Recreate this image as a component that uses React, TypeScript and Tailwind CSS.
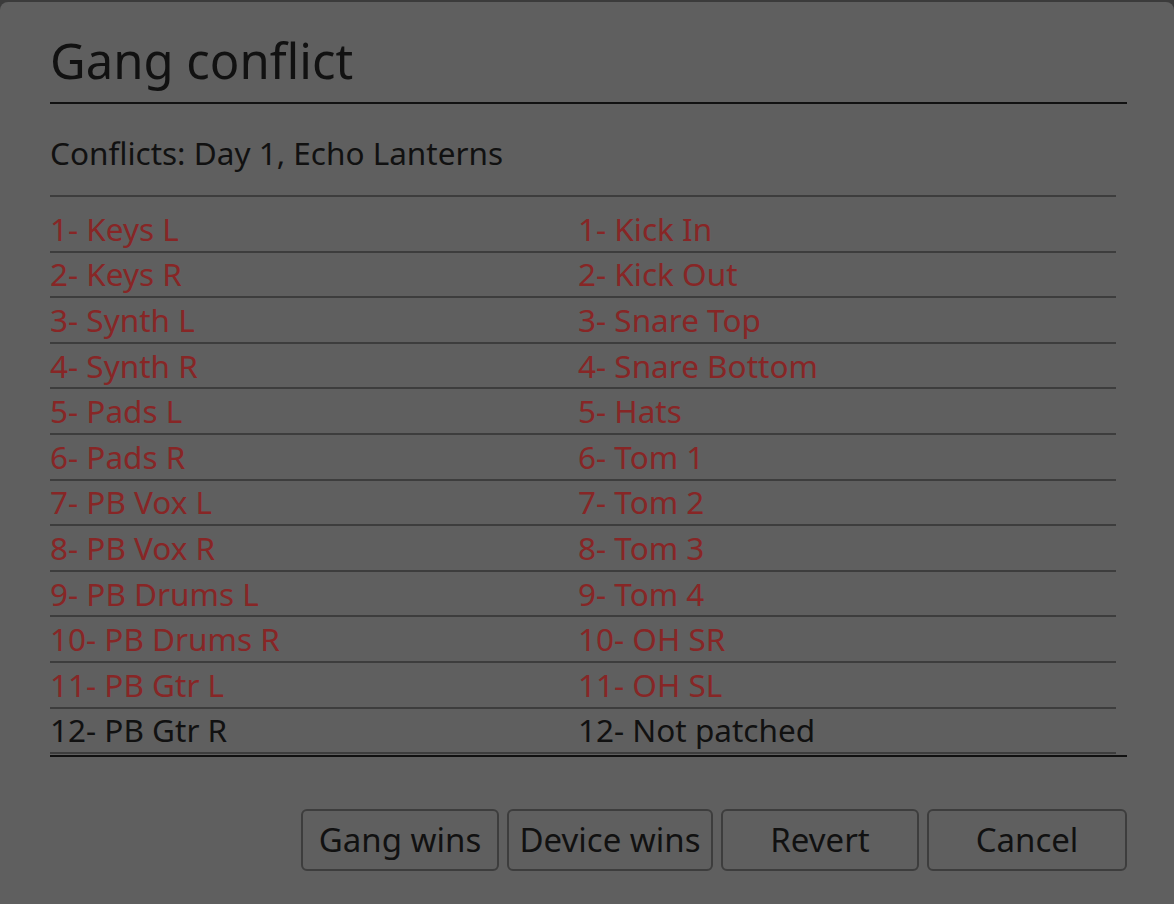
const left = [
  "1- Keys L",
  "2- Keys R",
  "3- Synth L",
  "4- Synth R",
  "5- Pads L",
  "6- Pads R",
  "7- PB Vox L",
  "8- PB Vox R",
  "9- PB Drums L",
  "10- PB Drums R",
  "11- PB Gtr L",
  "12- PB Gtr R",
];

const right = [
  "1- Kick In",
  "2- Kick Out",
  "3- Snare Top",
  "4- Snare Bottom",
  "5- Hats",
  "6- Tom 1",
  "7- Tom 2",
  "8- Tom 3",
  "9- Tom 4",
  "10- OH SR",
  "11- OH SL",
  "12- Not patched",
];

// last row is the only one that isn't in conflict
const conflicted = (i: number) => i < 11;

const App = () => {
  return (
    <div
      className="w-[1174px] h-[904px] bg-[#3b3b3b] pt-[2px] overflow-hidden"
      style={{ fontFamily: '"Noto Sans", "Open Sans", sans-serif' }}
    >
      <div className="h-[902px] bg-[#5f5f5f] rounded-t-[8px] pl-[50px] pr-[47px] pt-[27px] text-[#111111]">
        <h1 className="text-[49px] leading-[62px] pb-[11px] border-b-2 border-[#111111]">
          Gang conflict
        </h1>
        <p className="text-[31.5px] leading-[40px] mt-[29px]">
          Conflicts: Day 1, Echo Lanterns
        </p>
        <div className="mt-[22px] pb-[1px] border-b-2 border-[#111111]">
          <div className="mr-[11px] border-t-2 border-[#3d3d3d] pt-[10px]">
            {left.map((name, i) => (
              <div
                key={name}
                className={`grid grid-cols-[528px_1fr] h-[45.6px] items-center border-b-2 border-[#3d3d3d] text-[31.5px] leading-[40px] ${
                  conflicted(i) ? "text-[#872626]" : "text-[#111111]"
                }`}
              >
                <span>{name}</span>
                <span>{right[i]}</span>
              </div>
            ))}
          </div>
        </div>
        <div className="flex justify-end gap-[8px] mt-[52px]">
          {["Gang wins", "Device wins", "Revert", "Cancel"].map((label) => (
            <button
              key={label}
              className={`h-[62px] ${
                label === "Device wins" ? "w-[206px]" : label === "Cancel" ? "w-[200px]" : "w-[198px]"
              } rounded-[6px] border-2 border-[#3d3d3d] text-[33px] leading-[40px] text-[#111111]`}
            >
              {label}
            </button>
          ))}
        </div>
      </div>
    </div>
  );
};

export default App;
